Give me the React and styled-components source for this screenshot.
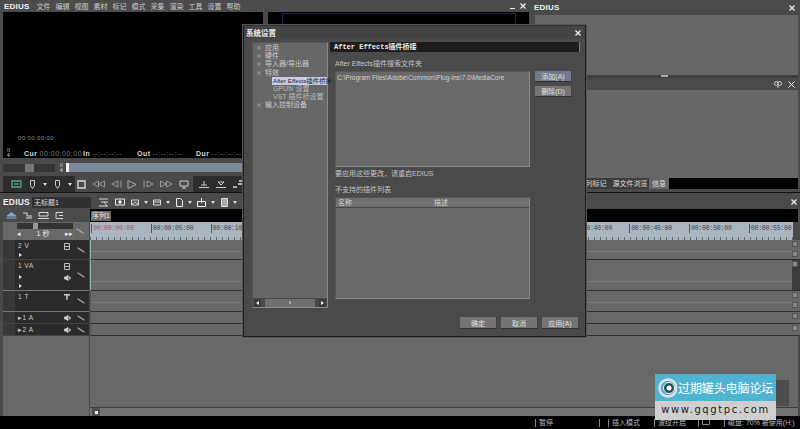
import styled, { createGlobalStyle } from "styled-components";

const GlobalStyle = createGlobalStyle`
  * { box-sizing: border-box; }
  html, body { margin: 0; padding: 0; background: #4a4a4a; overflow: hidden; }
  body { width: 800px; height: 429px; font-family: "Liberation Sans", "Noto Sans CJK SC", sans-serif; }
`;

const Screen = styled.div`
  position: relative;
  width: 800px;
  height: 429px;
  display: grid;
  grid-template-rows: 192px 224px 13px;
  background: #4a4a4a;
  color: #d8d8d8;
  font-size: 7px;
  overflow: hidden;
`;

const Top = styled.div`
  display: grid;
  grid-template-columns: 531px 269px;
  min-height: 0;
`;

/* ---------- 播放器 ---------- */
const Editor = styled.div`
  display: grid;
  grid-template-rows: 12px 1fr;
  min-height: 0;
`;

const MenuBar = styled.div`
  display: flex;
  align-items: center;
  padding: 0 5px 0 4px;
  background: #4b4b4b;
`;

const Brand = styled.span`
  font-weight: 700;
  font-size: ${(p) => p.$size || 8}px;
  color: #eee;
  letter-spacing: 0.2px;
`;

const MenuList = styled.nav`
  display: flex;
  margin-left: 7px;
`;

const MenuItem = styled.span`
  width: 19px;
  font-size: 7px;
  color: #c8c8c8;
`;

const WindowButtons = styled.div`
  margin-left: auto;
  display: flex;
  gap: 5px;
  align-items: center;
  color: #ddd;
`;

const Players = styled.div`
  display: grid;
  grid-template-columns: 265px 266px;
  min-height: 0;
`;

const Player = styled.div`
  display: flex;
  flex-direction: column;
  padding-left: 3px;
  min-height: 0;
`;

const Monitor = styled.div`
  position: relative;
  flex: 1;
  background: #000;
  margin-right: 2px;
`;

const SafeFrame = styled.div`
  position: absolute;
  left: 14px;
  right: 13px;
  top: 1px;
  bottom: 0;
  border: 1px solid #1d2748;
  border-bottom: 0;
`;

const Timecode = styled.div`
  position: absolute;
  left: 15px;
  bottom: 17px;
  font-size: 6px;
  letter-spacing: 0.4px;
  color: #8d8d8d;
`;

const MonitorInfo = styled.div`
  position: absolute;
  left: 4px;
  right: 0;
  bottom: 1px;
  height: 9px;
  display: grid;
  grid-template-columns: 17px 59px 54px 59px 1fr;
  align-items: center;
  font-size: 7px;
  white-space: nowrap;
`;

const InfoField = styled.span`
  color: #7c7c7c;
  letter-spacing: 0.5px;
  b { color: #d8d8d8; margin-right: 2px; font-weight: 700; }
`;

const SliderRow = styled.div`
  height: 18px;
  display: flex;
  align-items: center;
  padding-top: 1px;
`;

const Shuttle = styled.div`
  width: 52px;
  height: 8px;
  padding-left: 22px;
  background: #353535;
`;

const ShuttleThumb = styled.div`
  width: 9px;
  height: 8px;
  background: #777;
`;

const FrameMark = styled.div`
  width: 6px;
  margin-left: ${(p) => p.$ml || 0}px;
  font-size: 5px;
  line-height: 5px;
  color: #ddd;
`;

const Playhead = styled.div`
  width: 3px;
  height: 9px;
  background: #f2f2f2;
`;

const PositionBar = styled.div`
  flex: 1;
  height: 9px;
  background: #7d8a9b;
`;

const Transport = styled.div`
  height: 16px;
  display: grid;
  grid-template-columns: 72px 118px 1fr;
  background: #2d2d2d;
`;

const TransportGroup = styled.div`
  display: flex;
  align-items: center;
  justify-content: space-between;
  padding: ${(p) => p.$pad};
  background: ${(p) => (p.$light ? "#4a4a4a" : "#2d2d2d")};
`;

/* ---------- 右侧面板 ---------- */
const SidePanels = styled.div`
  display: flex;
  flex-direction: column;
  padding-right: 2px;
  min-height: 0;
`;

const PanelTitle = styled.div`
  height: ${(p) => p.$h}px;
  display: flex;
  align-items: center;
  gap: 6px;
  padding: 0 3px;
  background: #4a4a4a;
  color: #eee;
  > :first-child { margin-right: auto; }
`;

const PanelBody = styled.div`
  flex: ${(p) => p.$grow};
  margin-left: 4px;
  background: #676767;
`;

const Splitter = styled.div`
  height: 3px;
  display: flex;
  justify-content: center;
  background: #3e3e3e;
  i { width: 7px; height: 2px; background: #aaa; }
`;

const TabStrip = styled.div`
  height: 11px;
  margin-left: 4px;
  display: flex;
  background: #000;
`;

const Tab = styled.span`
  width: ${(p) => p.$w}px;
  line-height: 11px;
  text-align: center;
  white-space: nowrap;
  font-size: 7px;
  color: #ddd;
  background: ${(p) => (p.$active ? "#666" : "#3c3c3c")};
`;

const PanelFoot = styled.div`
  height: 3px;
`;

/* ---------- 时间线 ---------- */
const Timeline = styled.div`
  display: flex;
  flex-direction: column;
  border-top: 1px solid #111;
  min-height: 0;
`;

const TimelineTitle = styled.div`
  height: 16px;
  display: flex;
  align-items: center;
  padding: 2px 3px 0 3px;
`;

const ProjectName = styled.div`
  width: 59px;
  height: 11px;
  margin-left: 2px;
  padding-left: 2px;
  line-height: 11px;
  font-size: 7px;
  color: #ddd;
  background: #303030;
`;

const ToolGroup = styled.div`
  display: flex;
  align-items: center;
  gap: ${(p) => p.$gap || 0}px;
  margin-left: ${(p) => p.$ml || 0}px;
`;

const CloseSlot = styled.div`
  margin-left: auto;
  display: flex;
  color: #eee;
`;

const TimelineTabs = styled.div`
  height: 13px;
  display: grid;
  grid-template-columns: 90px 1fr;
`;

const TimelineTools = styled.div`
  display: flex;
  align-items: center;
  gap: 6px;
  padding-left: 6px;
`;

const SequenceStrip = styled.div`
  display: flex;
  align-items: flex-end;
  padding: 1px 9px 1px 1px;
  background: linear-gradient(#000, #000) no-repeat 0 0 / calc(100% - 2px) 100%;
`;

const SequenceTab = styled.span`
  width: 20px;
  height: 10px;
  line-height: 10px;
  text-align: center;
  font-size: 7px;
  color: #eee;
  background: #676767;
`;

const Rows = styled.div`
  flex: 1;
  display: flex;
  flex-direction: column;
  min-height: 0;
`;

const Row = styled.div`
  display: grid;
  grid-template-columns: 90px 1fr;
  height: ${(p) => p.$h}px;
  flex: ${(p) => (p.$fill ? 1 : "none")};
`;

const RulerHead = styled.div`
  margin-left: 3px;
  margin-right: 1px;
  display: grid;
  grid-template-columns: 73px 1fr;
  align-items: center;
  background: #686868;
`;

const ScaleBox = styled.div`
  height: 100%;
  display: flex;
  flex-direction: column;
  justify-content: space-between;
  padding: 1px 0 2px 14px;
`;

const ScaleTrack = styled.div`
  width: 56px;
  height: 6px;
  padding-left: 16px;
  background: #333;
  i { display: block; width: 5px; height: 6px; background: #999; }
`;

const ScaleLabel = styled.div`
  display: flex;
  justify-content: space-between;
  width: 56px;
  color: #eee;
  font-size: 7px;
  line-height: 8px;
`;

const Ruler = styled.div`
  display: flex;
  align-items: flex-start;
  padding: 2px 0 0 1px;
  overflow: hidden;
  margin-right: 7px;
  background:
    repeating-linear-gradient(90deg, #5f6670 0 1px, transparent 1px 6px) 0 100% / 100% 3px no-repeat,
    #aab5c0;
`;

const RulerMark = styled.span`
  flex: 0 0 59.8px;
  white-space: nowrap;
  font-family: "Liberation Mono", monospace;
  font-size: 6.5px;
  letter-spacing: -0.2px;
  line-height: 9px;
  padding-left: 1px;
  border-left: 1px solid #555;
  color: ${(p) => (p.$start ? "#9a5a5a" : "#444")};
`;

const TrackHead = styled.div`
  margin-left: 3px;
  margin-right: 1px;
  display: grid;
  grid-template-columns: 12px 1fr 12px 15px;
  padding-right: 1px;
  background: linear-gradient(90deg, #383838 0 12px, #2b2b2b 12px);
  border-bottom: 1px solid ${(p) => (p.$thick ? "#777" : "#444")};
`;

const TrackLabels = styled.div`
  grid-column: 2;
  display: flex;
  flex-direction: column;
  justify-content: space-between;
  padding: 2px 0 2px 3px;
  font-size: 6.5px;
  line-height: 7px;
  letter-spacing: 0.6px;
  color: #ccc;
  white-space: nowrap;
`;

const Arrow = styled.i`
  display: block;
  width: 0;
  height: 0;
  margin-left: 1px;
  border-left: 3px solid #ddd;
  border-top: 2px solid transparent;
  border-bottom: 2px solid transparent;
`;

const TrackIcons = styled.div`
  display: flex;
  flex-direction: column;
  align-items: center;
  justify-content: ${(p) => p.$center ? "center" : "flex-start"};
  gap: 5px;
  padding-top: ${(p) => (p.$center ? 0 : 3)}px;
  color: #ccc;
`;

const Lane = styled.div`
  display: flex;
  border-left: 1px solid ${(p) => (p.$video ? "#86b5ad" : "#555")};
  border-bottom: 1px solid #303030;
  background: #686868;
`;

const LaneStripes = styled.div`
  flex: 1;
  background: linear-gradient(#7a7a7a, #7a7a7a) no-repeat 0 ${(p) => p.$line}px / 100% 1px;
`;

const LaneSide = styled.div`
  width: 8px;
  display: flex;
  flex-direction: column;
  align-items: flex-end;
  gap: 4px;
  padding: 1px 2px 0 0;
  background: ${(p) => (p.$dark ? "#3b3b3b" : "transparent")};
`;

const Stepper = styled.i`
  display: block;
  width: 6px;
  height: 6px;
  background: #858585;
  border: 1px solid #555;
`;

const EmptyHead = styled.div`
  margin-left: 3px;
  background: #686868;
  border-right: 1px solid #4c4c4c;
`;

const EmptyLane = styled.div`
  background: #686868;
  margin-right: 2px;
`;

const ScrollRow = styled.div`
  display: flex;
  align-items: center;
  margin-right: 2px;
  padding-left: 2px;
  background: #747474;
  border-top: 1px solid #3c3c3c;
`;

const ScrollThumb = styled.div`
  width: 8px;
  height: 8px;
  display: flex;
  align-items: center;
  justify-content: center;
  background: #505050;
  i { width: 3px; height: 3px; background: #eee; }
`;

/* ---------- 状态栏 ---------- */
const StatusBar = styled.div`
  display: grid;
  grid-template-columns: 535px 64px 9px 46px 44px 26px 1fr;
  align-items: center;
  background: #000;
  color: #bdbdbd;
  font-size: 7px;
  white-space: nowrap;
`;

const StatusCell = styled.span`
  height: 8px;
  line-height: 8px;
  padding-left: 3px;
  border-left: 1px solid #888;
`;

/* ---------- 系统设置对话框 ---------- */
const Dialog = styled.div`
  position: absolute;
  left: 243px;
  top: 25px;
  width: 343px;
  height: 312px;
  display: flex;
  flex-direction: column;
  background: #4a4a4a;
  border: 1px solid #1c1c1c;
  border-top-color: #333;
  box-shadow: 0 0 0 1px #555;
`;

const DialogTitle = styled.div`
  height: 13px;
  display: flex;
  align-items: center;
  justify-content: space-between;
  padding: 0 4px 0 2px;
  font-size: 7.5px;
  font-weight: 700;
  color: #eee;
  background: #444;
`;

const DialogBody = styled.div`
  flex: 1;
  display: grid;
  grid-template-columns: 76px 1fr;
  column-gap: 2px;
  padding: 3px 5px 0 8px;
  min-height: 0;
`;

const TreePane = styled.div`
  height: 266px;
  display: flex;
  flex-direction: column;
  background: #676767;
  border: 1px solid #555;
  border-right-color: #8a8a8a;
  border-bottom-color: #8a8a8a;
`;

const TreeList = styled.div`
  flex: 1;
  padding-top: 1px;
`;

const TreeItem = styled.div`
  height: 8.2px;
  line-height: 8.2px;
  display: flex;
  align-items: center;
  padding-left: ${(p) => (p.$child ? 20 : 4)}px;
  font-size: 7px;
  white-space: nowrap;
  color: ${(p) => (p.$child ? "#bbb" : "#ccc")};
`;

const Toggle = styled.i`
  flex: none;
  width: 4px;
  height: 4px;
  margin-right: 4px;
  background: #8c8c8c;
  border: 1px solid #777;
`;

const Selected = styled.span`
  margin-left: -1px;
  padding-left: 1px;
  width: 55px;
  font-size: 6.2px;
  color: #223;
  background: #c9cbe0;
`;

const TreeScroll = styled.div`
  height: 9px;
  display: flex;
  align-items: center;
  background: #4a4a4a;
`;

const ScrollEnd = styled.div`
  width: 7px;
  height: 8px;
  margin: 0 1px;
  background: #3a3a3a;
  color: #eee;
  display: flex;
  align-items: center;
  justify-content: center;
`;

const ScrollTrack = styled.div`
  flex: 1;
  height: 8px;
  margin: 0 3px;
  display: flex;
  justify-content: center;
  align-items: center;
  background: #6f6f6f;
  i { width: 2px; height: 3px; background: #aaa; }
`;

const Content = styled.div`
  display: flex;
  flex-direction: column;
`;

const SectionHeader = styled.div`
  height: 10px;
  line-height: 10px;
  padding-left: 4px;
  font-family: "Liberation Mono", "Noto Sans CJK SC", monospace;
  font-size: 7px;
  font-weight: 700;
  color: #eee;
  background: #1d1d1d;
  border-right: 1px solid #777;
`;

const FieldLabel = styled.div`
  height: 8px;
  line-height: 8px;
  margin: ${(p) => p.$mt}px 0 3px 5px;
  font-size: 7px;
  color: #c4c4c4;
  white-space: nowrap;
`;

const ListRow = styled.div`
  display: flex;
  gap: 5px;
  padding-left: 5px;
`;

const ListBox = styled.div`
  width: 195px;
  height: 96px;
  padding: 2px 1px;
  font-size: 6.5px;
  line-height: 8px;
  color: #d2d2d2;
  white-space: nowrap;
  background: #686868;
  border: 1px solid #555;
  border-right-color: #8a8a8a;
  border-bottom-color: #8a8a8a;
`;

const SideButtons = styled.div`
  display: flex;
  flex-direction: column;
  gap: 4px;
`;

const Button = styled.div`
  width: ${(p) => p.$w || 37}px;
  height: ${(p) => p.$h || 11}px;
  display: flex;
  align-items: center;
  justify-content: center;
  font-size: 7px;
  color: #e0e0e0;
  background: ${(p) => (p.$accent ? "#6f7a8e" : "#747474")};
  border-bottom: 1px solid #333;
  border-right: 1px solid #444;
`;

const Message = styled.div`
  margin: 3px 0 0 5px;
  height: 8px;
  line-height: 8px;
  font-size: 7px;
  color: #c4c4c4;
`;

const Table = styled.div`
  width: 195px;
  height: 102px;
  margin-left: 5px;
  background: #686868;
  border: 1px solid #555;
  border-right-color: #8a8a8a;
  border-bottom-color: #8a8a8a;
`;

const TableHead = styled.div`
  height: 10px;
  display: grid;
  grid-template-columns: 96px 1fr;
  padding-left: 2px;
  line-height: 9px;
  font-size: 7px;
  color: #d0d0d0;
  background: #707070;
  border-bottom: 1px solid #444;
`;

const DialogFooter = styled.div`
  height: 29px;
  display: flex;
  justify-content: flex-end;
  gap: 4px;
  padding: 10px 6px 0 0;
`;

/* ---------- 水印 ---------- */
const Watermark = styled.div`
  position: absolute;
  left: 655px;
  top: 374px;
  width: 121px;
  height: 46px;
  display: grid;
  grid-template-rows: 27px 19px;
  &::after {
    content: "";
    position: absolute;
    left: 100%;
    top: 6px;
    width: 13px;
    height: 26px;
    background: #4d4d4d;
  }
`;

const WatermarkTop = styled.div`
  display: flex;
  align-items: center;
  gap: 1px;
  padding-left: 2px;
  background: #4fb3d1;
`;

const WatermarkName = styled.span`
  font-size: 12px;
  letter-spacing: -0.1px;
  color: #fff;
  white-space: nowrap;
`;

const WatermarkUrl = styled.div`
  text-align: center;
  line-height: 18px;
  font-family: "DejaVu Sans", sans-serif;
  font-size: 10px;
  letter-spacing: 1.6px;
  color: #222;
  background: #cfcfcf;
`;

/* ---------- 图标 ---------- */
const Svg = ({ w = 11, h = 9, vb, children, color = "#d8d8d8", sw = 1 }) => (
  <svg width={w} height={h} viewBox={vb || `0 0 ${w} ${h}`} fill="none" stroke={color} strokeWidth={sw} style={{ display: "block", flex: "none" }}>
    {children}
  </svg>
);

const Close = ({ size = 6, sw = 1.3 }) => (
  <Svg w={size} h={size} sw={sw} color="#eee"><path d={`M0.5 0.5L${size - 0.5} ${size - 0.5}M${size - 0.5} 0.5L0.5 ${size - 0.5}`} /></Svg>
);

const Pencil = () => <Svg w={8} h={6} color="#aaa" sw={1.2}><path d="M0.5 0.8L7.5 5.2" /></Svg>;
const Speaker = () => <Svg w={7} h={6} color="#ccc"><path d="M0.5 2v2h1.5l2 1.5v-5L2 2zM5.5 1.5c1 1 1 2 0 3" fill="#ccc" /></Svg>;
const Clip = () => <Svg w={6} h={7} color="#bbb"><path d="M0.5 0.5h5v6h-5zM0.5 3.5h5" /></Svg>;
const TextT = () => <Svg w={6} h={6} color="#ccc" sw={1.5}><path d="M0 0.8h6M3 0.8v5" /></Svg>;
const Caret = () => <Svg w={4} h={3} color="#ddd"><path d="M0 0h4L2 3z" fill="#ddd" stroke="none" /></Svg>;

const transportIcons = [
  <Svg key="stop" w={9} h={9} sw={1.3} color="#ddd"><path d="M1 1h7v7H1z" /></Svg>,
  <Svg key="rew" w={13} h={8} color="#999"><path d="M6.5 1L1 4l5.5 3zM12.5 1L7 4l5.5 3z" /></Svg>,
  <Svg key="back" w={11} h={8} color="#999"><path d="M7 1L1 4l6 3zM10 0.5v7" /></Svg>,
  <Svg key="play" w={10} h={9} color="#aaa"><path d="M1 0.5L9 4.5 1 8.500z" /></Svg>,
  <Svg key="next" w={11} h={8} color="#999"><path d="M4 1l6 3-6 3zM1 0.5v7" /></Svg>,
  <Svg key="ffw" w={13} h={8} color="#999"><path d="M0.5 1L6 4 0.5 7zM6.5 1L12 4 6.5 7z" /></Svg>,
  <Svg key="out" w={10} h={9} color="#ccc"><path d="M1 1h8v5H1zM5 6v2M3 8h4" /></Svg>,
];

const titleTools = [
  [<Svg key="a" w={11} h={9}><path d="M1 1h9M3 4h7M6 4l3 4M1 8h9" /></Svg>, 0],
  [<Svg key="b" w={10} h={8} color="#eee"><path d="M0.5 1h9v6h-9z" /><circle cx="5" cy="4" r="1.3" fill="#eee" /></Svg>, 6],
  [<Svg key="c" w={8} h={7}><path d="M0.5 1h7v5h-7zM1 5l3-2 3 2" /></Svg>, 6],
  [<Svg key="d" w={8} h={7}><path d="M0.5 1h7v5h-7zM1 3h6" /></Svg>, 5],
  [<Svg key="e" w={7} h={9} color="#eee"><path d="M0.5 0.5h4l2 2v6h-6z" /></Svg>, 6],
  [<Svg key="f" w={9} h={9} color="#eee"><path d="M0.5 3.5h8v5h-8zM4.5 0v5" /></Svg>, 5],
  [<Svg key="g" w={7} h={9} color="#ddd"><path d="M0.5 0.5h6v8h-6z" fill="#aaa" /></Svg>, 6],
];

const menus = ["文件", "编辑", "视图", "素材", "标记", "模式", "采集", "渲染", "工具", "设置", "帮助"];
const rulerMarks = ["00:00:00:00", "00:00:05:00", "00:00:10:00", "00:00:15:00", "00:00:20:00", "00:00:25:00", "00:00:30:00", "00:00:35:00", "00:00:40:00", "00:00:45:00", "00:00:50:00", "00:00:55:00"];

const tracks = [
  { h: 20, labels: ["2 V", <Arrow key="a" />], icons: [<Clip key="c" />], line: 11, video: true, steppers: 2 },
  { h: 31, labels: ["1 VA", <Arrow key="a" />, <Arrow key="b" />], icons: [<Clip key="c" />, <Speaker key="s" />], line: 21, video: true, steppers: 1, dark: true, thick: true },
  { h: 21, labels: ["1 T"], icons: [<TextT key="t" />], line: 11, steppers: 2, thick: true },
  { h: 12, labels: ["▸1 A"], icons: [<Speaker key="s" />], line: 99, center: true, steppers: 1 },
  { h: 12, labels: ["▸2 A"], icons: [<Speaker key="s" />], line: 99, center: true, steppers: 1 },
];

export default function App() {
  return (
    <Screen>
      <GlobalStyle />
      <Top>
        <Editor>
          <MenuBar>
            <Brand>EDIUS</Brand>
            <MenuList>
              {menus.map((m) => <MenuItem key={m}>{m}</MenuItem>)}
            </MenuList>
            <WindowButtons>
              <Svg w={5} h={5} color="#eee"><path d="M0 4.5h5" /></Svg>
              <Close />
            </WindowButtons>
          </MenuBar>
          <Players>
            <Player>
              <Monitor>
                <Timecode>00:00:00:00</Timecode>
                <MonitorInfo>
                  <FrameMark>II<br />4</FrameMark>
                  <InfoField><b>Cur</b>00:00:00:00</InfoField>
                  <InfoField><b>In</b>--:--:--:--</InfoField>
                  <InfoField><b>Out</b>--:--:--:--</InfoField>
                  <InfoField><b>Dur</b>--:--:--:--</InfoField>
                </MonitorInfo>
              </Monitor>
              <SliderRow>
                <Shuttle><ShuttleThumb /></Shuttle>
                <FrameMark $ml={5}>II<br />4</FrameMark>
                <Playhead />
                <PositionBar />
              </SliderRow>
              <Transport>
                <TransportGroup $pad="0 3px 0 8px">
                  <Svg w={11} h={8} color="#4fa58c" sw={1.3}><path d="M1 1h9v6H1z" /><path d="M3 4h5" /></Svg>
                  <Svg w={5} h={9} color="#ccc"><path d="M0.5 0.5h4v5l-2 3-2-3z" /></Svg>
                  <Caret />
                  <Svg w={5} h={9} color="#ccc"><path d="M0.5 0.5h4v5l-2 3-2-3z" /></Svg>
                  <Caret />
                </TransportGroup>
                <TransportGroup $light $pad="0 4px 0 2px">{transportIcons}</TransportGroup>
                <TransportGroup $pad="0 22px 0 6px">
                  <Svg w={10} h={7} color="#ccc"><path d="M5 0v4M2 4h6M0 6.5h10" /></Svg>
                  <Svg w={10} h={7} color="#ccc"><path d="M2 1h6L5 4zM0 6.5h10" /></Svg>
                  <Svg w={10} h={9} color="#aaa" sw={2}><path d="M0 7h4M5 4h4M6 1h4" /></Svg>
                </TransportGroup>
              </Transport>
            </Player>
            <Player>
              <Monitor><SafeFrame /></Monitor>
            </Player>
          </Players>
        </Editor>
        <SidePanels>
          <PanelTitle $h={15}><Brand>EDIUS</Brand><Close /></PanelTitle>
          <PanelBody $grow={60} />
          <Splitter><i /></Splitter>
          <PanelTitle $h={12}>
            <span />
            <Svg w={8} h={7} color="#ccc"><circle cx="2.5" cy="2.5" r="2" /><circle cx="5.5" cy="2.5" r="2" /><path d="M4 5v2" /></Svg>
            <Close size={7} sw={1} />
          </PanelTitle>
          <PanelBody $grow={88} />
          <TabStrip>
            <Tab $w={21}>素材库</Tab>
            <Tab $w={18}>特效</Tab>
            <Tab $w={37}>序列标记</Tab>
            <Tab $w={38}>源文件浏览</Tab>
            <Tab $w={20} $active>信息</Tab>
          </TabStrip>
          <PanelFoot />
        </SidePanels>
      </Top>

      <Timeline>
        <TimelineTitle>
          <Brand $size={8.5}>EDIUS</Brand>
          <ProjectName>无标题1</ProjectName>
          <ToolGroup $ml={7}>
            {titleTools.map(([icon, gap], i) => (
              <ToolGroup key={i} $ml={gap} $gap={5}>
                {icon}
                {i > 1 && <Caret />}
              </ToolGroup>
            ))}
          </ToolGroup>
          <CloseSlot><Close /></CloseSlot>
        </TimelineTitle>
        <TimelineTabs>
          <TimelineTools>
            <Svg w={11} h={7} color="#7fa6d8"><path d="M5.5 0.5L10 4H1z" fill="#7fa6d8" /><path d="M0.5 6h10" /></Svg>
            <Svg w={9} h={7}><path d="M0 1h4v3h5M3 6h6" /></Svg>
            <Svg w={11} h={7}><path d="M1 0.5h9v3.500H1zM0 6.5h11" /></Svg>
            <Svg w={9} h={7}><path d="M8 0.5H1v6h7M4 3.5h4" /></Svg>
          </TimelineTools>
          <SequenceStrip><SequenceTab>序列1</SequenceTab></SequenceStrip>
        </TimelineTabs>
        <Rows>
          <Row $h={18}>
            <RulerHead>
              <ScaleBox>
                <ScaleTrack><i /></ScaleTrack>
                <ScaleLabel><span>◂</span><span>1 秒</span><span>▸▸</span></ScaleLabel>
              </ScaleBox>
              <Pencil />
            </RulerHead>
            <Ruler>
              {rulerMarks.map((t, i) => <RulerMark key={t} $start={i === 0}>{t}</RulerMark>)}
            </Ruler>
          </Row>
          {tracks.map((t, i) => (
            <Row key={i} $h={t.h}>
              <TrackHead $thick={t.thick}>
                <TrackLabels>
                  {t.labels.map((l, j) => <div key={j}>{l}</div>)}
                </TrackLabels>
                <TrackIcons $center={t.center}>{t.icons}</TrackIcons>
                <TrackIcons $center><Pencil /></TrackIcons>
              </TrackHead>
              <Lane $video={t.video}>
                <LaneStripes $line={t.line} />
                <LaneSide $dark={t.dark}>
                  {Array.from({ length: t.steppers }, (_, k) => <Stepper key={k} />)}
                </LaneSide>
              </Lane>
            </Row>
          ))}
          <Row $fill>
            <EmptyHead />
            <EmptyLane />
          </Row>
          <Row $h={9}>
            <EmptyHead />
            <ScrollRow>
              <ScrollThumb><i /></ScrollThumb>
            </ScrollRow>
          </Row>
        </Rows>
      </Timeline>

      <StatusBar>
        <span />
        <StatusCell>暂停</StatusCell>
        <StatusCell />
        <StatusCell>插入模式</StatusCell>
        <StatusCell>波纹开启</StatusCell>
        <StatusCell><Svg w={8} h={6} color="#888"><path d="M0.5 0.5h7v5h-7z" /></Svg></StatusCell>
        <StatusCell>磁盘: 70% 被使用(H:)</StatusCell>
      </StatusBar>

      <Dialog>
        <DialogTitle>
          <span>系统设置</span>
          <Close />
        </DialogTitle>
        <DialogBody>
          <TreePane>
            <TreeList>
              <TreeItem><Toggle />应用</TreeItem>
              <TreeItem><Toggle />硬件</TreeItem>
              <TreeItem><Toggle />导入器/导出器</TreeItem>
              <TreeItem><Toggle />特效</TreeItem>
              <TreeItem $child><Selected>After Effects插件桥接</Selected></TreeItem>
              <TreeItem $child>GPUfx 设置</TreeItem>
              <TreeItem $child>VST 插件桥设置</TreeItem>
              <TreeItem><Toggle />输入控制设备</TreeItem>
            </TreeList>
            <TreeScroll>
              <ScrollEnd><Svg w={3} h={4} color="#eee"><path d="M3 0v4L0 2z" fill="#eee" stroke="none" /></Svg></ScrollEnd>
              <ScrollTrack><i /></ScrollTrack>
              <ScrollEnd><Svg w={3} h={4} color="#eee"><path d="M0 0v4l3-2z" fill="#eee" stroke="none" /></Svg></ScrollEnd>
            </TreeScroll>
          </TreePane>
          <Content>
            <SectionHeader>After Effects插件桥接</SectionHeader>
            <FieldLabel $mt={8}>After Effects插件搜索文件夹</FieldLabel>
            <ListRow>
              <ListBox>C:\Program Files\Adobe\Common\Plug-ins\7.0\MediaCore</ListBox>
              <SideButtons>
                <Button $accent>添加(A)</Button>
                <Button>删除(D)</Button>
              </SideButtons>
            </ListRow>
            <Message>要应用这些更改，请重启EDIUS</Message>
            <FieldLabel $mt={8}>不支持的插件列表</FieldLabel>
            <Table>
              <TableHead><span>名称</span><span>描述</span></TableHead>
            </Table>
          </Content>
        </DialogBody>
        <DialogFooter>
          <Button $h={12}>确定</Button>
          <Button $h={12}>取消</Button>
          <Button $h={12}>应用(A)</Button>
        </DialogFooter>
      </Dialog>

      <Watermark>
        <WatermarkTop>
          <Svg w={20} h={22} vb="0 0 20 22" color="#e8dce4" sw={2.5}>
            <circle cx="11" cy="11" r="8.5" />
            <circle cx="12" cy="11" r="5.5" fill="#1f4f57" stroke="#eee" strokeWidth={1} />
            <circle cx="12" cy="11" r="2.5" fill="#fff" stroke="none" />
          </Svg>
          <WatermarkName>过期罐头电脑论坛</WatermarkName>
        </WatermarkTop>
        <WatermarkUrl>www.gqgtpc.com</WatermarkUrl>
      </Watermark>
    </Screen>
  );
}
